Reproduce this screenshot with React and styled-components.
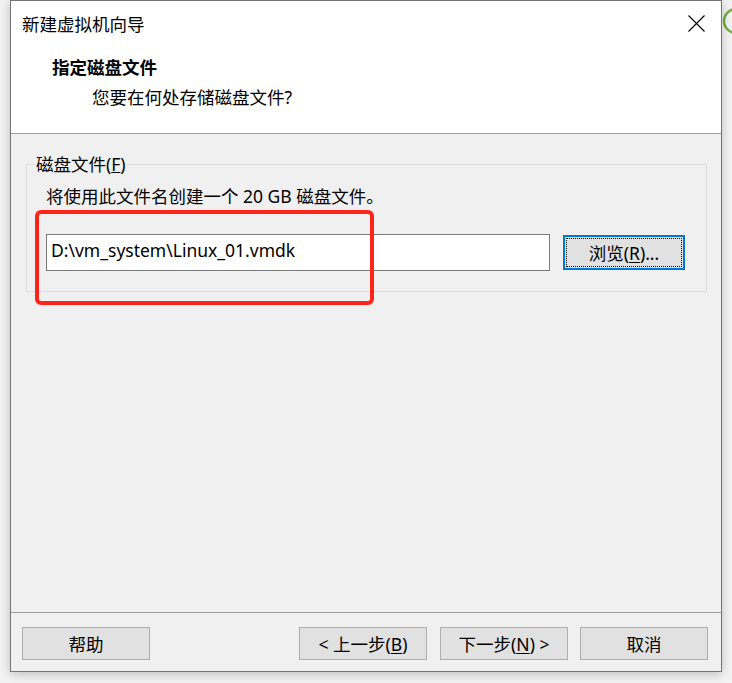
import React from 'react';
import styled, { createGlobalStyle } from 'styled-components';

const GlobalStyle = createGlobalStyle`
    html, body {
        margin: 0;
        padding: 0;
        background: #f3f3f3;
    }
    * {
        box-sizing: border-box;
    }
`;

const font = `"Noto Sans", "Noto Sans CJK SC", sans-serif`;

const Page = styled.div`
    position: relative;
    width: 732px;
    height: 683px;
    overflow: hidden;
    background: #f3f3f3;
    font-family: ${font};
    color: #000;
`;

const BackIcon = styled.svg`
    position: absolute;
    left: 722px;
    top: 7px;
`;

const Window = styled.div`
    position: relative;
    margin-left: 10px;
    width: 712px;
    height: 672px;
    border: 1px solid #747474;
    background: #f0f0f0;
    box-shadow: 0 2px 10px rgba(0, 0, 0, 0.22);
    display: flex;
    flex-direction: column;
`;

const TitleBar = styled.div`
    height: 45px;
    background: #fff;
    display: flex;
    align-items: center;
    justify-content: space-between;
    padding: 0 16px 0 11px;
    font-size: 17.5px;
    .close {
        display: flex;
    }
`;

const Header = styled.div`
    height: 88px;
    background: #fff;
    border-bottom: 1px solid #a0a0a0;
    padding: 9px 0 0 41px;
    .heading {
        font-weight: 700;
        font-size: 17.5px;
        line-height: 24px;
    }
    .sub {
        margin-top: 6px;
        padding-left: 40px;
        font-size: 17.5px;
        line-height: 24px;
    }
`;

const Body = styled.div`
    flex: 1;
    padding: 19px 14px 0 15px;
`;

const GroupBox = styled.fieldset`
    margin: 0;
    border: 1px solid #dcdcdc;
    padding: 9px 21px 20px 19px;
    legend {
        margin-left: -11px;
        padding: 0 1px;
        font-size: 17.5px;
        line-height: 22px;
    }
    .desc {
        font-size: 17.5px;
        line-height: 24px;
    }
`;

const FileRow = styled.div`
    margin-top: 26px;
    display: flex;
    align-items: center;
    gap: 13px;
`;

const PathInput = styled.div`
    flex: 1;
    height: 37px;
    background: #fff;
    border: 1px solid #7a7a7a;
    padding: 3px 0 0 4px;
    font-size: 17.5px;
    line-height: 24px;
`;

const Button = styled.div`
    width: ${(p) => p.$w || 128}px;
    height: ${(p) => (p.$focus ? 35 : 33)}px;
    background: #e1e1e1;
    border: ${(p) => (p.$focus ? '2px solid #0078d7' : '1px solid #adadad')};
    outline: ${(p) => (p.$focus ? '1px dotted #000' : 'none')};
    outline-offset: -4px;
    display: flex;
    align-items: center;
    justify-content: center;
    font-size: 17.5px;
    line-height: 24px;
    white-space: pre;
    u {
        text-decoration-thickness: 1px;
        text-underline-offset: 2px;
    }
`;

const Footer = styled.div`
    border-top: 1px solid #a0a0a0;
    padding: 14px 13px 11px 11px;
    display: flex;
    align-items: center;
    .spacer {
        flex: 1;
    }
    .pair {
        display: flex;
        gap: 13px;
        margin-right: 12px;
    }
`;

const Highlight = styled.div`
    position: absolute;
    left: 35px;
    top: 210px;
    width: 339px;
    height: 95px;
    border: 4px solid #ff2418;
    border-radius: 6px;
    pointer-events: none;
`;

function App() {
    return (
        <Page>
            <GlobalStyle />
            <BackIcon width="10" height="30" viewBox="0 0 10 30">
                <circle cx="14" cy="14" r="12" fill="none" stroke="#72b043" strokeWidth="2.5" />
            </BackIcon>
            <Window>
                <TitleBar>
                    <span>新建虚拟机向导</span>
                    <span className="close">
                        <svg width="17" height="17" viewBox="0 0 17 17">
                            <path d="M0.5 0.5 L16.5 16.5 M16.5 0.5 L0.5 16.5" stroke="#000" strokeWidth="1.1" />
                        </svg>
                    </span>
                </TitleBar>
                <Header>
                    <div className="heading">指定磁盘文件</div>
                    <div className="sub">您要在何处存储磁盘文件?</div>
                </Header>
                <Body>
                    <GroupBox>
                        <legend>
                            磁盘文件(<u>F</u>)
                        </legend>
                        <div className="desc">将使用此文件名创建一个 20 GB 磁盘文件。</div>
                        <FileRow>
                            <PathInput>D:\vm_system\Linux_01.vmdk</PathInput>
                            <Button $w={122} $focus>
                                浏览(<u>R</u>)...
                            </Button>
                        </FileRow>
                    </GroupBox>
                </Body>
                <Footer>
                    <Button>帮助</Button>
                    <div className="spacer" />
                    <div className="pair">
                        <Button>
                            {'< 上一步('}
                            <u>B</u>)
                        </Button>
                        <Button>
                            下一步(<u>N</u>)
                            {' >'}
                        </Button>
                    </div>
                    <Button>取消</Button>
                </Footer>
            </Window>
            <Highlight />
        </Page>
    );
}

export default App;
